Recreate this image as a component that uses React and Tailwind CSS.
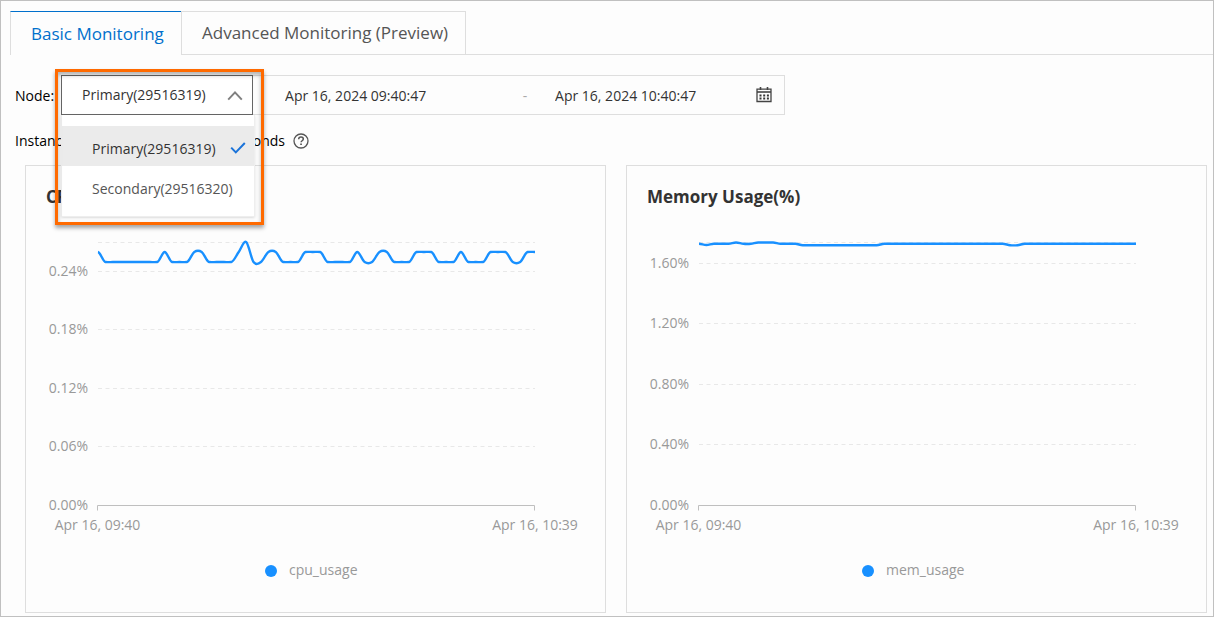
import React, { useState } from "react";

const NODES = ["Primary(29516319)", "Secondary(29516320)"];

const PLOT = { left: 72, right: 509, bottom: 285 };

// one sample per minute, as y positions in the plot
const repeat = (n, y) => Array(n).fill(y);

const CPU_POINTS = [
  32, ...repeat(8, 42), 32, ...repeat(3, 42), 32, 32, ...repeat(4, 42), 32, 22, 42, 42, 32, 32,
  ...repeat(3, 42), ...repeat(3, 32), ...repeat(4, 42), 32, 42, 42, 32, 32, ...repeat(3, 42),
  ...repeat(3, 32), ...repeat(3, 42), 32, ...repeat(3, 42), ...repeat(3, 32), 42, 42, 32, 32,
];

const MEM_POINTS = [
  23.8, 25, ...repeat(3, 23.8), 22.5, 23.8, 23.8, ...repeat(3, 22.5), ...repeat(3, 23.8),
  ...repeat(11, 25.2), ...repeat(17, 23.8), 25.2, 25.2, ...repeat(16, 23.8),
];

const CHARTS = [
  {
    title: "CPU Usage(%)",
    legend: "cpu_usage",
    legendX: 245,
    points: CPU_POINTS,
    ticks: [
      { y: 51, label: "0.24%" },
      { y: 109, label: "0.18%" },
      { y: 168, label: "0.12%" },
      { y: 226, label: "0.06%" },
    ],
  },
  {
    title: "Memory Usage(%)",
    legend: "mem_usage",
    legendX: 241,
    points: MEM_POINTS,
    ticks: [
      { y: 43, label: "1.60%" },
      { y: 103, label: "1.20%" },
      { y: 164, label: "0.80%" },
      { y: 224, label: "0.40%" },
    ],
  },
];

// Spline through the samples; runs of three or more equal samples stay nearly flat
function smoothPath(values) {
  const step = (PLOT.right - PLOT.left) / (values.length - 1);
  const at = (i) => values[Math.max(0, Math.min(values.length - 1, i))];
  const slope = (i) => {
    const v = at(i);
    const flat = (v === at(i + 1) && v === at(i + 2)) || (v === at(i - 1) && v === at(i - 2));
    return ((at(i + 1) - at(i - 1)) / 6) * (flat ? 0.25 : 1);
  };
  let d = `M${PLOT.left} ${values[0]}`;
  for (let i = 0; i < values.length - 1; i++) {
    const x = PLOT.left + i * step;
    const c1 = at(i) + slope(i);
    const c2 = at(i + 1) - slope(i + 1);
    d += `C${x + step / 3} ${c1} ${x + (step * 2) / 3} ${c2} ${x + step} ${at(i + 1)}`;
  }
  return d;
}

function ChevronUp() {
  return (
    <svg className="pointer-events-none absolute right-2.5 top-3.5" width="16" height="14" viewBox="0 0 16 14" fill="none" aria-hidden="true">
      <path d="M1.2 10.6 8 3.4l6.8 7.2" stroke="#808080" strokeWidth="2" />
    </svg>
  );
}

function CheckIcon() {
  return (
    <svg width="16" height="12" viewBox="0 0 16 12" fill="none" aria-hidden="true">
      <path d="m1.2 5.6 4.6 4.8L14.8 1" stroke="#1a73d9" strokeWidth="2" />
    </svg>
  );
}

function HelpIcon() {
  return (
    <svg width="16" height="16" viewBox="0 0 16 16" fill="none" aria-hidden="true">
      <circle cx="8" cy="8" r="7" stroke="#555" strokeWidth="1.3" />
      <path d="M5.7 6.3c0-1.4 1-2.2 2.3-2.2s2.3.8 2.3 2c0 1.6-2.2 1.7-2.2 3.2" stroke="#555" strokeWidth="1.5" />
      <path d="M7.2 10.4h1.7v1.6H7.2z" fill="#555" />
    </svg>
  );
}

function CalendarIcon() {
  return (
    <svg width="16" height="16" viewBox="0 0 16 16" fill="none" aria-hidden="true">
      <path d="M1 2.2h14v12.3H1z" stroke="#444" strokeWidth="1.3" />
      <path d="M1 5h14" stroke="#444" strokeWidth="1.6" />
      <path d="M4.500 0v3M11.500 0v3" stroke="#444" strokeWidth="1.6" />
      <path d="M3.500 8.500h9.500M3.500 11.500h9.500" stroke="#333" strokeWidth="2" strokeDasharray="2 1.700" />
    </svg>
  );
}

function Tabs() {
  return (
    <div className="flex pl-[9px]" role="tablist">
      <button role="tab" aria-selected="true" className="h-11 w-[171px] whitespace-nowrap border-l border-t border-l-[#dedede] border-t-[#0070cc] pl-5 text-left text-[17px] text-[#0070cc]">
        Basic Monitoring
      </button>
      <button role="tab" aria-selected="false" className="h-11 w-[285px] whitespace-nowrap border border-[#dedede] pl-5 text-left text-[17px] text-[#555]">
        Advanced Monitoring (Preview)
      </button>
      <div className="flex-1 border-b border-[#dedede]" />
    </div>
  );
}

function NodeSelect() {
  const [node, setNode] = useState(NODES[0]);

  return (
    <div className="relative ml-[7px] w-48">
      <select
        id="node"
        value={node}
        onChange={(e) => setNode(e.target.value)}
        className="h-10 w-full appearance-none border border-[#666] bg-white px-5 pb-0.5 text-[#333] outline-none"
      >
        {NODES.map((n) => (
          <option key={n}>{n}</option>
        ))}
      </select>
      <ChevronUp />
      <ul className="absolute left-0 top-full z-10 w-[194px] border border-t-0 border-[#eee] bg-white pb-2.5 pt-[11px] shadow-sm" role="listbox">
        {NODES.map((n) => (
          <li key={n} role="option" aria-selected={n === node}>
            <button
              onClick={() => setNode(n)}
              className={
                n === node
                  ? "flex h-10 w-full items-center justify-between bg-[#ebebeb] pl-[30px] pr-2 pt-1 text-[#333]"
                  : "flex h-10 w-full items-center justify-between pl-[30px] pr-2 pt-1 text-[#555]"
              }
            >
              {n}
              {n === node && <CheckIcon />}
            </button>
          </li>
        ))}
      </ul>
      <div className="pointer-events-none absolute -left-1.5 -top-1.5 z-20 h-[156px] w-[209px] border-3 border-[#ff6a00] shadow-[0_3px_4px_rgba(0,0,0,0.35),inset_0_3px_4px_rgba(0,0,0,0.3)]" />
    </div>
  );
}

function DateRange() {
  return (
    <div className="flex h-10 w-[532px] items-center border border-l-0 border-[#dedede] pl-8 pr-3 text-[#333]">
      <input aria-label="Start time" defaultValue="Apr 16, 2024 09:40:47" className="w-[220px] outline-none" />
      <span className="w-10 text-center text-[#aaa]">-</span>
      <input aria-label="End time" defaultValue="Apr 16, 2024 10:40:47" className="ml-2.5 min-w-0 flex-1 outline-none" />
      <button aria-label="Pick dates">
        <CalendarIcon />
      </button>
    </div>
  );
}

function ChartCard({ chart }) {
  return (
    <section className="border border-[#dedede]">
      <h2 className="h-[54px] pl-5 pt-[19px] text-[17px] font-bold leading-6 text-[#333]">{chart.title}</h2>
      <svg className="block w-full text-[14px]" viewBox="0 0 579 392" fill="#999">
        {[{ y: 22 }, ...chart.ticks].map((t) => (
          <g key={t.y}>
            <path d={`M${PLOT.left} ${t.y + 0.5}H${PLOT.right}`} stroke="#e8e8e8" strokeDasharray="4 3.5" />
            {t.label && (
              <text x="62" y={t.y + 5} textAnchor="end">
                {t.label}
              </text>
            )}
          </g>
        ))}
        <text x="62" y={PLOT.bottom + 5} textAnchor="end">
          0.00%
        </text>
        <path d="M71.5 290.5V285.5H508.5V290.5" fill="none" stroke="#bfbfbf" />
        <text x="71.5" y="310" textAnchor="middle">
          Apr 16, 09:40
        </text>
        <text x="509" y="310" textAnchor="middle">
          Apr 16, 10:39
        </text>
        <path d={smoothPath(chart.points)} fill="none" stroke="#1890ff" strokeWidth="2.4" />
        <circle cx={chart.legendX} cy="351" r="6" fill="#1890ff" />
        <text x={chart.legendX + 18} y="355">
          {chart.legend}
        </text>
      </svg>
    </section>
  );
}

export default function App() {
  return (
    <main className="min-h-screen border border-[#c0c0c0] bg-[#fdfdfd] pb-[3px] pt-2.5 font-['Open_Sans',sans-serif] text-[14px] text-black">
      <Tabs />
      <div className="mt-5 flex items-center pl-3.5">
        <label htmlFor="node">Node:</label>
        <NodeSelect />
        <DateRange />
      </div>
      <div className="mt-4 flex items-center gap-2 pl-3.5">
        <p className="flex w-[270px] justify-between leading-5">
          <span>Instance Monitoring</span>
          <span>60 Seconds</span>
        </p>
        <HelpIcon />
      </div>
      <div className="mt-3.5 grid grid-cols-2 gap-5 pl-6 pr-1.5">
        {CHARTS.map((c) => (
          <ChartCard key={c.title} chart={c} />
        ))}
      </div>
    </main>
  );
}
